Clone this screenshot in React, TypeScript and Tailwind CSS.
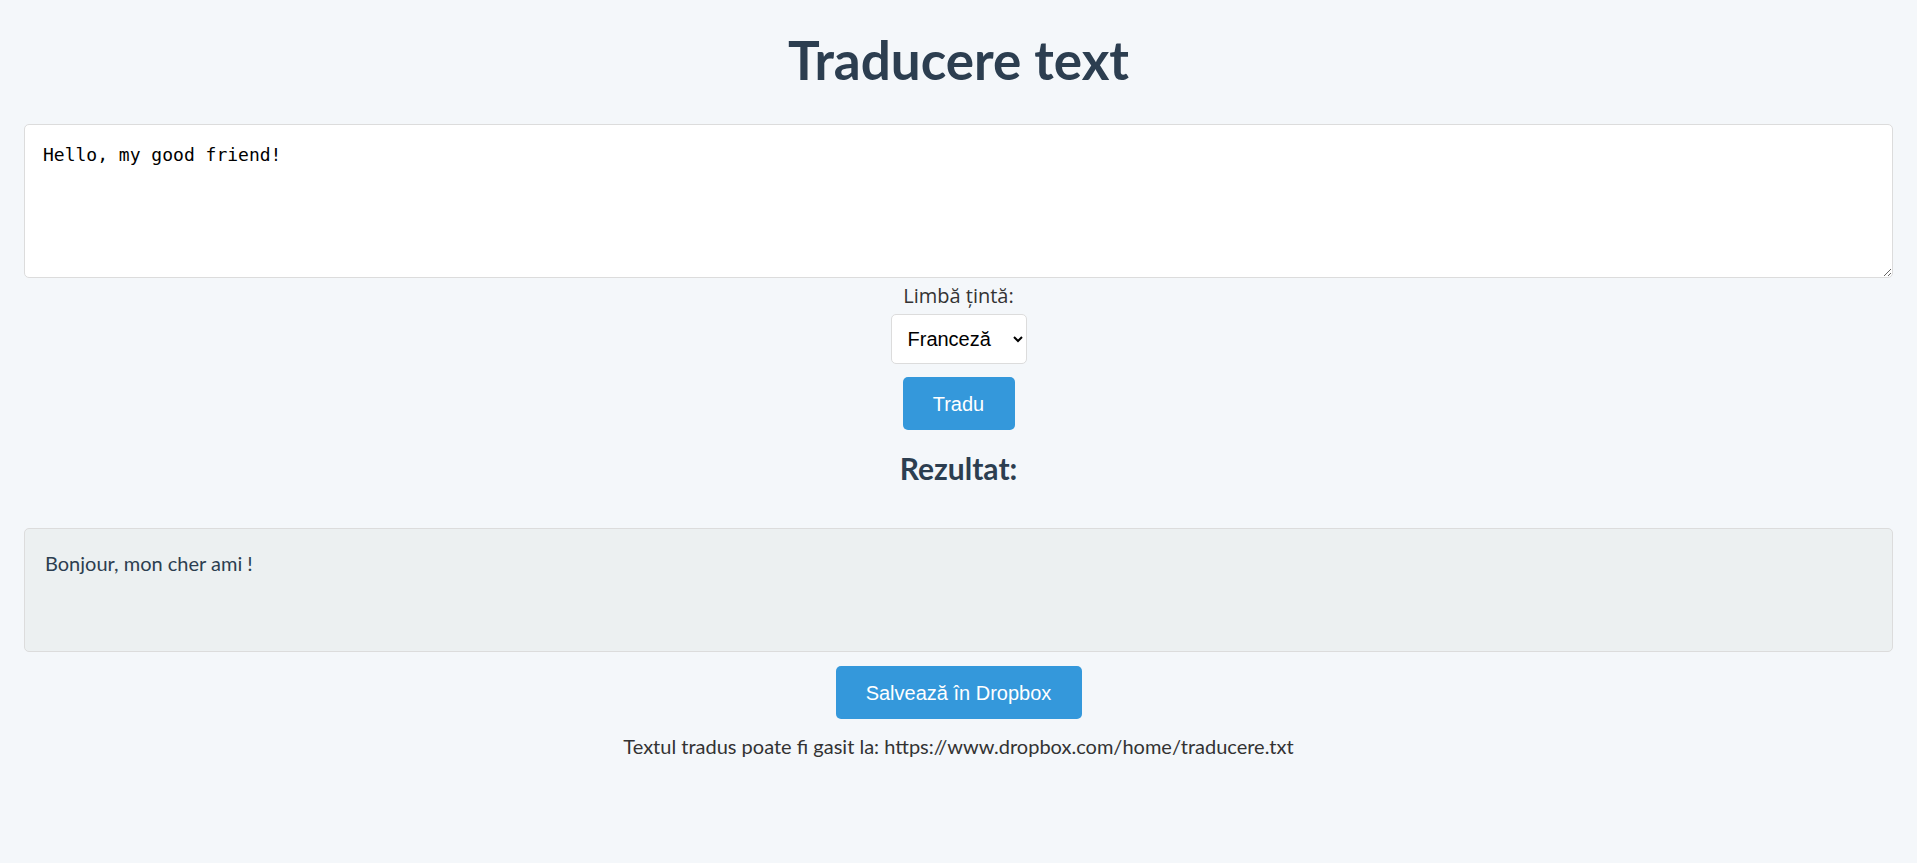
import React, { useState } from 'react';

const App = () => {
  const [text, setText] = useState('Hello, my good friend!');
  const [lang, setLang] = useState('fr');

  return (
    <div className="min-h-[863px] bg-[#f4f7fa] px-6 pt-[27px] font-['Lato',sans-serif] text-[#333]">
      <h1 className="text-center text-[53px] leading-[65px] font-bold text-[#2c3e50]">
        Traducere text
      </h1>

      <textarea
        value={text}
        onChange={(e) => setText(e.target.value)}
        className="mt-[32px] block h-[154px] w-full rounded-[5px] border border-[#dcdcdc] bg-white p-[18px] font-['DejaVu_Sans_Mono',monospace] text-[18px] leading-[24px] text-black outline-none"
      />

      <div className="flex flex-col items-center">
        <label className="mt-[4px] font-['Open_Sans',sans-serif] text-[20px] leading-[28px]">Limbă țintă:</label>
        <select
          value={lang}
          onChange={(e) => setLang(e.target.value)}
          className="mt-[4px] h-[50px] w-[136px] rounded-[5px] border border-[#dcdcdc] bg-white px-3 font-['Liberation_Sans',sans-serif] text-[20px] text-black"
        >
          <option value="fr">Franceză</option>
          <option value="en">Engleză</option>
          <option value="de">Germană</option>
        </select>
        <button className="mt-[13px] h-[53px] w-[112px] rounded-[5px] bg-[#3498db] font-['Liberation_Sans',sans-serif] text-[20px] text-white">
          Tradu
        </button>
        <h2 className="mt-[20px] text-[30px] leading-[36px] font-bold text-[#2c3e50]">Rezultat:</h2>
      </div>

      <div className="mt-[42px] h-[124px] rounded-[5px] border border-[#dcdcdc] bg-[#ecf0f1] p-5 text-[20px] leading-[28px] text-[#2c3e50]">
        Bonjour, mon cher ami !
      </div>

      <div className="flex flex-col items-center">
        <button className="mt-[14px] h-[53px] w-[246px] whitespace-nowrap rounded-[5px] bg-[#3498db] font-['Liberation_Sans',sans-serif] text-[20px] text-white">
          Salvează în Dropbox
        </button>
        <p className="mt-[13px] text-[20px] leading-[28px]">
          Textul tradus poate fi gasit la: https://www.dropbox.com/home/traducere.txt
        </p>
      </div>
    </div>
  );
};

export default App;
